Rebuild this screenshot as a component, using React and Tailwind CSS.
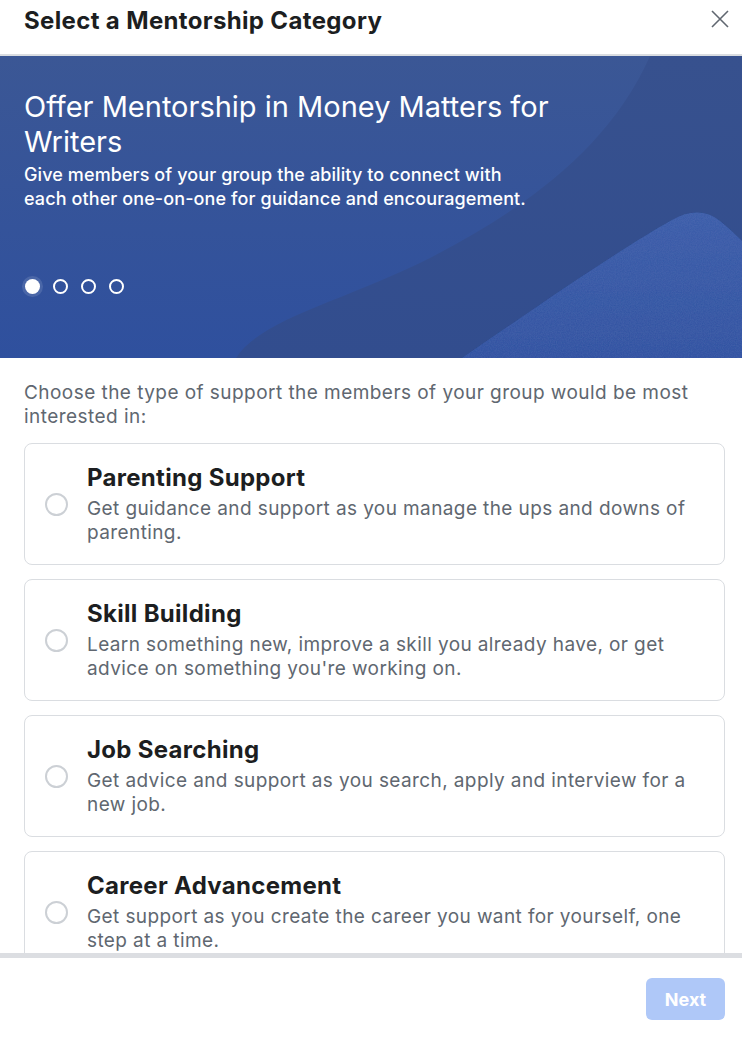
import React, { useState } from 'react';

const categories = [
  {
    title: 'Parenting Support',
    text: 'Get guidance and support as you manage the ups and downs of parenting.',
  },
  {
    title: 'Skill Building',
    text: "Learn something new, improve a skill you already have, or get advice on something you're working on.",
  },
  {
    title: 'Job Searching',
    text: 'Get advice and support as you search, apply and interview for a new job.',
  },
  {
    title: 'Career Advancement',
    text: 'Get support as you create the career you want for yourself, one step at a time.',
  },
];

function BannerArt() {
  return (
    <svg className="absolute inset-0 h-full w-full" viewBox="0 0 742 302" preserveAspectRatio="none">
      <defs>
        <linearGradient id="bg" x1="0" y1="0" x2="0" y2="1">
          <stop offset="0" stopColor="#3b5795" />
          <stop offset="1" stopColor="#2f509e" />
        </linearGradient>
        <linearGradient id="band" x1="0" y1="0" x2="0" y2="1">
          <stop offset="0" stopColor="#37518e" />
          <stop offset="1" stopColor="#324d8e" />
        </linearGradient>
        <linearGradient id="hill" x1="0" y1="0" x2="0" y2="1">
          <stop offset="0" stopColor="#3a5ba8" />
          <stop offset="1" stopColor="#2e50a0" />
        </linearGradient>
        <filter id="grain">
          <feTurbulence type="fractalNoise" baseFrequency="0.85" numOctaves="2" result="n" />
          <feColorMatrix in="n" type="matrix" values="0 0 0 0 0.25  0 0 0 0 0.38  0 0 0 0 0.72  0 0 0 0.12 0" result="c" />
          <feComposite in="c" in2="SourceGraphic" operator="in" result="g" />
          <feMerge>
            <feMergeNode in="SourceGraphic" />
            <feMergeNode in="g" />
          </feMerge>
        </filter>
      </defs>
      <rect width="742" height="302" fill="url(#bg)" />
      <path d="M650 0 C610 90 530 150 430 202 C345 245 262 262 236 302 L742 302 L742 0 Z" fill="url(#band)" />
      <path
        d="M462 302 C545 245 622 192 672 164 C690 154 706 154 720 165 C730 173 736 179 742 185 L742 302 Z"
        fill="url(#hill)"
        filter="url(#grain)"
      />
    </svg>
  );
}

export default function App() {
  const [selected, setSelected] = useState(null);
  const [slide, setSlide] = useState(0);

  return (
    <div className="flex h-[1038px] w-[742px] flex-col bg-white font-['Inter',sans-serif] text-[#1c1e21]">
      <div className="flex h-[56px] shrink-0 items-start justify-between border-b-2 border-[#dadde1] pl-6 pr-[6px]">
        <h1 className="pt-[5px] text-[24px] font-bold leading-8 tracking-[0.35px]">Select a Mentorship Category</h1>
        <button className="mt-[3px] flex h-8 w-8 items-center justify-center text-[#606770]">
          <svg width="18" height="18" viewBox="0 0 18 18" fill="none" stroke="currentColor" strokeWidth="1.6">
            <path d="M1 1 L17 17 M17 1 L1 17" />
          </svg>
        </button>
      </div>

      <div className="relative h-[302px] shrink-0 overflow-hidden text-white">
        <BannerArt />
        <div className="relative flex h-full flex-col px-6 pt-[33px]">
          <h2 className="max-w-[560px] text-[29px] font-normal leading-[35px]">
            Offer Mentorship in Money Matters for Writers
          </h2>
          <p className="mt-1 max-w-[520px] text-[18px] font-medium leading-6 tracking-[0.1px]">
            Give members of your group the ability to connect with each other one-on-one for guidance and encouragement.
          </p>
          <div className="mt-[68px] flex items-center gap-[13px] pl-[1px]">
            {[0, 1, 2, 3].map((i) => (
              <button
                key={i}
                onClick={() => setSlide(i)}
                className={
                  i === slide
                    ? 'h-[15px] w-[15px] rounded-full bg-white shadow-[0_0_0_3px_rgba(255,255,255,0.12)]'
                    : 'h-[15px] w-[15px] rounded-full border-2 border-white'
                }
              />
            ))}
          </div>
        </div>
      </div>

      <div className="min-h-0 flex-1 overflow-hidden pl-6 pr-[17px] pt-[23px]">
        <p className="text-[19px] leading-6 tracking-[0.45px] text-[#606770]">
          Choose the type of support the members of your group would be most interested in:
        </p>
        <div className="mt-[14px] flex flex-col gap-[14px]">
          {categories.map((c, i) => (
            <label
              key={c.title}
              onClick={() => setSelected(i)}
              className="flex min-h-[122px] cursor-pointer items-center gap-[19px] rounded-lg border border-[#dadde1] pb-[19px] pl-5 pr-5 pt-5"
            >
              <span
                className={
                  selected === i
                    ? 'h-[23px] w-[23px] shrink-0 rounded-full border-[7px] border-[#1877f2]'
                    : 'h-[23px] w-[23px] shrink-0 rounded-full border-2 border-[#ccd0d5]'
                }
              />
              <span className="flex flex-col">
                <span className="text-[24px] font-bold leading-7 tracking-[0.3px] text-[#1c1e21]">{c.title}</span>
                <span className="mt-[5px] text-[19px] leading-6 tracking-[0.4px] text-[#606770]">{c.text}</span>
              </span>
            </label>
          ))}
        </div>
      </div>

      <div className="h-[5px] shrink-0 bg-[#dcdee2]" />
      <div className="flex h-[80px] shrink-0 items-start justify-end pr-[17px] pt-5">
        <button disabled className="h-[42px] w-[79px] rounded-md bg-[#afc8f8] text-[18px] font-bold text-white">
          Next
        </button>
      </div>
    </div>
  );
}
